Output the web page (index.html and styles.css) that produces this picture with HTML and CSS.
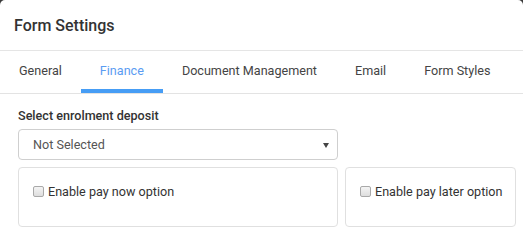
FILE: index.html
```html
<!DOCTYPE html>
<html>
<head>
<meta charset="utf-8">
<link rel="stylesheet" href="styles.css">
</head>
<body>
<div class="modal">
  <div class="modal-header">
    <h1 class="modal-title">Form Settings</h1>
  </div>
  <div class="tabs">
    <div class="tab">General</div>
    <div class="tab active">Finance</div>
    <div class="tab">Document Management</div>
    <div class="tab">Email</div>
    <div class="tab">Form Styles</div>
  </div>
  <div class="modal-body">
    <div class="field-label">Select enrolment deposit</div>
    <div class="select">
      <span class="select-value">Not Selected</span>
      <span class="select-arrow"></span>
    </div>
    <div class="panels">
      <div class="panel panel-wide">
        <label class="check"><span class="box"></span>Enable pay now option</label>
      </div>
      <div class="panel panel-narrow">
        <label class="check"><span class="box"></span>Enable pay later option</label>
      </div>
    </div>
  </div>
</div>
</body>
</html>
```

FILE: styles.css
```css
html {
  background: #fff;
}
body {
  margin: 0;
  padding: 0;
  background: linear-gradient(#3a3a3a 0, #3a3a3a 6px, #fff 6px);
}
.modal {
  background: #fff;
  border-radius: 5px 5px 0 0;
  font-family: Roboto, "Liberation Sans", sans-serif;
  color: #333;
}
.modal-header {
  border-bottom: 1px solid #e5e5e5;
  display: flex;
  align-items: center;
  padding: 1px 0 0 14px;
  box-sizing: border-box;
  height: 51px;
}
.modal-title {
  margin: 0;
  font-size: 16px;
  font-weight: 500;
  color: #333;
}
.tabs {
  display: flex;
  height: 43px;
  box-sizing: border-box;
  border-bottom: 1px solid #e3e3e3;
}
.tab {
  padding: 1px 19px 0 19px;
  font-size: 12.6px;
  color: #444;
  display: flex;
  align-items: center;
  box-sizing: border-box;
  height: 42px;
  border-bottom: 4px solid transparent;
}
.tab.active {
  color: #5a9cf2;
  border-bottom-color: #469df5;
}
.modal-body {
  padding: 14px 7px 0 18px;
}
.field-label {
  font-size: 12.6px;
  font-weight: 500;
  color: #333;
  margin-bottom: 6px;
}
.select {
  width: 320px;
  height: 31px;
  box-sizing: border-box;
  border: 1px solid #cfcfcf;
  border-radius: 4px;
  display: flex;
  align-items: center;
  justify-content: space-between;
  padding: 0 8px 0 14px;
}
.select-value {
  font-size: 12.6px;
  color: #555;
}
.select-arrow {
  width: 0;
  height: 0;
  border-left: 3px solid transparent;
  border-right: 3px solid transparent;
  border-top: 5px solid #444;
  margin-top: 1px;
}
.panels {
  display: flex;
  gap: 7px;
  margin-top: 7px;
}
.panel {
  flex-shrink: 0;
  border: 1px solid #e0e0e0;
  border-radius: 4px;
  height: 60px;
  box-sizing: border-box;
  padding: 16px 0 0 14px;
}
.panel-wide { width: 320px; }
.panel-narrow { width: 171px; }
.check {
  display: flex;
  align-items: center;
  font-size: 12.6px;
  color: #333;
}
.box {
  width: 9px;
  height: 9px;
  border: 1px solid #a9a9a9;
  border-radius: 2px;
  background: linear-gradient(#f4f4f4, #dedede);
  margin-right: 4px;
}
```
